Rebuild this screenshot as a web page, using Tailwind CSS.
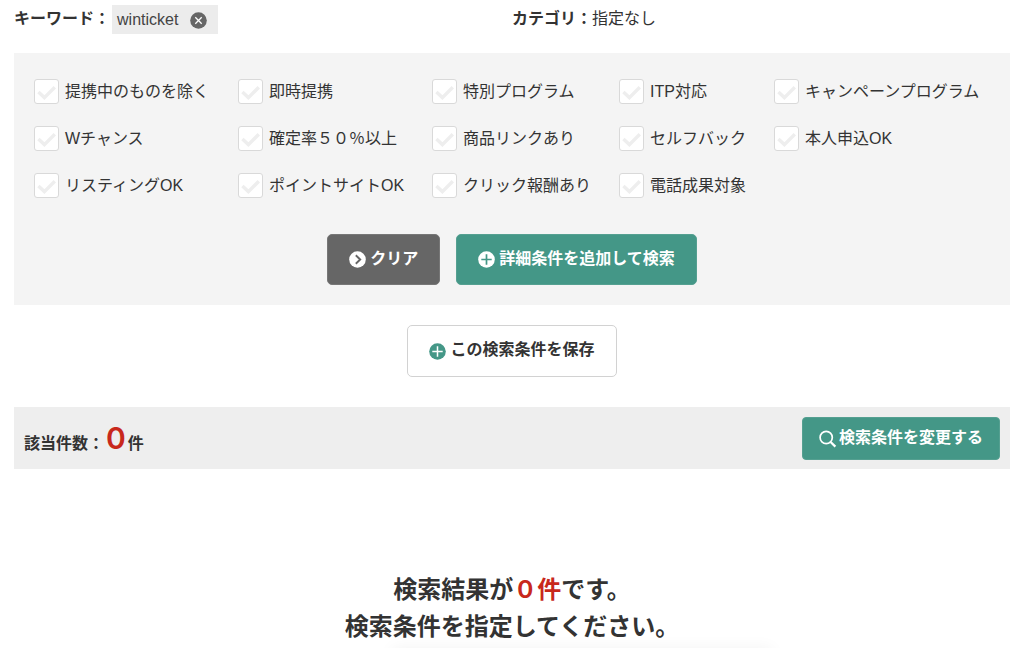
<!DOCTYPE html>
<html lang="ja">
<head>
<meta charset="utf-8">
<meta name="viewport" content="width=device-width, initial-scale=1">
<title>プログラム検索</title>
<script src="https://cdn.jsdelivr.net/npm/@tailwindcss/browser@4"></script>
</head>
<body class="bg-white text-[#333] text-base leading-6 font-['Liberation_Sans','Noto_Sans_CJK_JP',sans-serif]">
<main class="relative min-h-screen overflow-hidden px-3.5 pt-[5px]">

  <dl class="grid grid-cols-2">
    <div class="flex items-center">
      <dt class="pb-0.5 font-bold">キーワード：</dt>
      <dd class="ml-0.5 flex h-[29px] items-center gap-3 bg-[#ececec] pl-[5px] pr-[11px] text-[#444]">winticket
        <button type="button" aria-label="winticketを削除" class="block">
          <svg class="mt-0.5 size-[17px]" viewBox="0 0 17 17" fill="none"><circle cx="8.5" cy="8.5" r="8.3" fill="#666"/><path d="M5.3 5.3l6.4 6.4M11.7 5.3l-6.4 6.4" stroke="#fff" stroke-width="1.3"/></svg>
        </button>
      </dd>
    </div>
    <div class="flex items-center pb-0.5">
      <dt class="font-bold">カテゴリ：</dt>
      <dd>指定なし</dd>
    </div>
  </dl>

  <form class="mt-[19px] bg-[#f4f4f4] px-5 pt-[26px] pb-5" onsubmit="return false">
    <div id="filters" class="grid grid-cols-[204fr_194fr_187fr_155fr_216fr] gap-y-[22px]"></div>
    <div class="mt-9 flex justify-center gap-4 font-bold text-white">
      <button type="reset" class="flex h-[51px] items-center gap-1 rounded-[5px] border border-[#777] bg-[#666] px-[21px]">
        <svg class="size-[17px]" viewBox="0 0 17 17" fill="none"><circle cx="8.5" cy="8.5" r="8.3" fill="#fff"/><path d="M6.8 4.2l4.4 4.3-4.4 4.3" stroke="#666" stroke-width="1.9"/></svg>
        <span class="pb-0.5">クリア</span>
      </button>
      <button type="submit" class="flex h-[51px] items-center gap-1 rounded-[5px] border border-[#55a091] bg-[#449787] px-[21px]">
        <svg class="size-[17px]" viewBox="0 0 17 17" fill="none"><circle cx="8.5" cy="8.5" r="8.3" fill="#fff"/><path d="M8.5 3.3v10.4M3.3 8.5h10.4" stroke="#449787" stroke-width="1.7"/></svg>
        <span class="pb-0.5">詳細条件を追加して検索</span>
      </button>
    </div>
  </form>

  <div class="mt-5 flex justify-center">
    <button type="button" class="flex h-[52px] items-center gap-1 rounded-[5px] border border-[#d2d2d2] bg-white px-[21px] font-bold">
      <svg class="size-[17px]" viewBox="0 0 17 17" fill="none"><circle cx="8.5" cy="8.5" r="8.3" fill="#449787"/><path d="M8.5 3.3v10.4M3.3 8.5h10.4" stroke="#fff" stroke-width="1.5"/></svg>
      <span class="pb-0.5">この検索条件を保存</span>
    </button>
  </div>

  <section class="mt-[30px] flex h-[62px] items-center justify-between bg-[#eee] px-2.5 font-bold">
    <p class="flex items-baseline pt-1.5">該当件数：<strong class="mx-0.5 font-['Inter'] text-[30px] font-semibold text-[#c8281c]">0</strong>件</p>
    <button type="button" class="flex h-[43px] items-center gap-0.5 rounded-sm border border-[#55a091] bg-[#449787] px-4 text-white">
      <svg class="mt-0.5 size-[18px]" viewBox="0 0 18 18" fill="none" stroke="#fff"><circle cx="7.2" cy="7.5" r="6.1" stroke-width="1.7"/><path d="M11.6 12l4.8 4.6" stroke-width="2.3"/></svg>
      <span>検索条件を変更する</span>
    </button>
  </section>

  <p class="mt-[102px] text-center text-2xl leading-[37px] font-bold">検索結果が<span class="text-[#c8281c]">０件</span>です。<br>検索条件を指定してください。</p>

  <div class="absolute top-full left-1/2 h-5 w-[380px] -translate-x-[120px] shadow-[0_0_16px_rgba(0,0,0,0.05)]" aria-hidden="true"></div>
</main>

<template id="filter">
  <label class="flex items-center gap-1.5 whitespace-nowrap">
    <span class="grid shrink-0">
      <input type="checkbox" class="peer col-start-1 row-start-1 size-[25px] appearance-none rounded-[3px] border border-[#d9d9d9] bg-white">
      <svg class="pointer-events-none col-start-1 row-start-1 size-[25px] text-[#eee] peer-checked:text-[#449787]" viewBox="0 0 25 25" fill="none" stroke="currentColor" stroke-width="3.4"><path d="M4.4 13l6 5.6L20.8 8.2"/></svg>
    </span>
    <span></span>
  </label>
</template>
<script>
  const names = ['提携中のものを除く', '即時提携', '特別プログラム', 'ITP対応', 'キャンペーンプログラム',
    'Wチャンス', '確定率５０％以上', '商品リンクあり', 'セルフバック', '本人申込OK',
    'リスティングOK', 'ポイントサイトOK', 'クリック報酬あり', '電話成果対象'];
  const tpl = document.getElementById('filter');
  for (const name of names) {
    const item = tpl.content.cloneNode(true);
    item.querySelector('label > span:last-child').textContent = name;
    document.getElementById('filters').append(item);
  }
</script>
</body>
</html>
